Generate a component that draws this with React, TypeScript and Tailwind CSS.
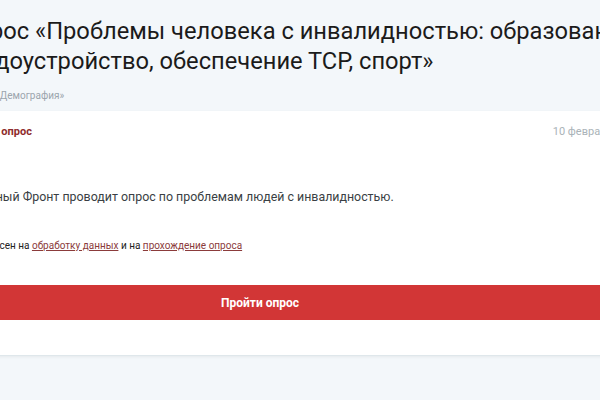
export default function App() {
  return (
    <div className="w-[600px] h-[400px] overflow-hidden bg-[#f3f7fa] font-['Roboto',sans-serif]">
      <div className="ml-[-40px] pt-[16px]">
        <h1 className="text-[23.7px] leading-[30px] text-[#1b1b1b] whitespace-nowrap font-normal">
          Опрос «Проблемы человека с инвалидностью: образование,
          <br />
          трудоустройство, обеспечение ТСР, спорт»
        </h1>
        <div className="ml-[35px] mt-[13px] text-[10px] leading-[14px] text-[#9ba5ad]">«Демография»</div>
      </div>

      <div className="ml-[-140px] w-[800px] mt-[8px] bg-white border-b border-[#dfe7eb] shadow-[0_1px_3px_rgba(0,0,0,0.06)] px-[20px] pt-[13px] pb-[35px]">
        <div className="flex items-center justify-between">
          <span className="ml-[63px] text-[11px] leading-[16px] font-bold text-[#8e2c2c]">Открытый опрос</span>
          <span className="text-[11px] leading-[16px] text-[#aab3b8]">10 февраля 2021</span>
        </div>
        <p className="ml-[79px] mt-[47px] text-[12.4px] leading-[20px] text-[#3a3f44] whitespace-nowrap">
          Народный Фронт проводит опрос по проблемам людей с инвалидностью.
        </p>
        <p className="ml-[92px] mt-[31px] text-[10px] leading-[16px] text-[#222] whitespace-nowrap">
          Согласен на{" "}
          <a href="#" className="underline text-[#8b3b3b]">обработку данных</a> и на{" "}
          <a href="#" className="underline text-[#8b3b3b]">прохождение опроса</a>
        </p>
        <button className="mt-[31px] w-full h-[35px] bg-[#d23636] text-white text-[12px] font-bold">
          Пройти опрос
        </button>
      </div>
    </div>
  );
}
